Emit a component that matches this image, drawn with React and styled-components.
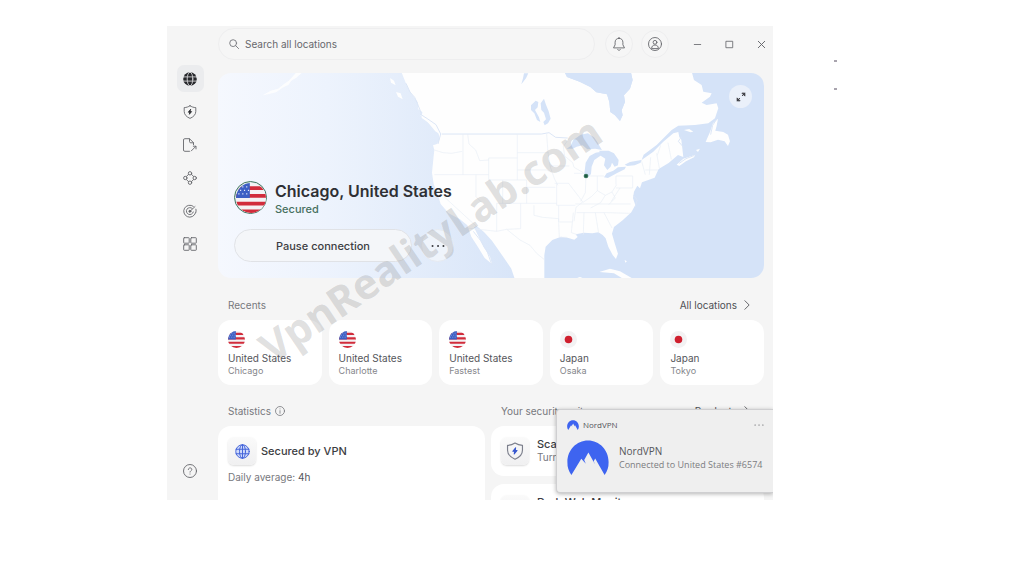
import React from 'react';
import styled, { createGlobalStyle } from 'styled-components';

const GlobalStyle = createGlobalStyle`
  * {
    box-sizing: border-box;
  }

  body {
    margin: 0;
    background: #ffffff;
    color: #3c3d42;
    font-family: Inter, "Liberation Sans", sans-serif;
    font-size: 10px;
    line-height: 12px;
  }

  button, input {
    font: inherit;
    color: inherit;
  }

  h1, h2, h3, p, ul {
    margin: 0;
    padding: 0;
    font-size: inherit;
    font-weight: inherit;
  }
`;

const recents = [
  { country: 'United States', place: 'Chicago', flag: 'us' },
  { country: 'United States', place: 'Charlotte', flag: 'us' },
  { country: 'United States', place: 'Fastest', flag: 'us' },
  { country: 'Japan', place: 'Osaka', flag: 'jp' },
  { country: 'Japan', place: 'Tokyo', flag: 'jp' },
];

const Icon = ({ size = 14, width = 1, children }) => (
  <svg
    width={size}
    height={size}
    viewBox="0 0 14 14"
    fill="none"
    stroke="currentColor"
    strokeWidth={width}
    strokeLinecap="round"
    strokeLinejoin="round"
    aria-hidden="true"
  >
    {children}
  </svg>
);

const GlobeSolidIcon = () => (
  <Icon>
    <circle cx="7" cy="7" r="6.8" fill="#26272b" stroke="none" />
    <g stroke="#e8e9eb" strokeWidth=".8">
      <ellipse cx="7" cy="7" rx="2.8" ry="6.8" />
      <path d="M.4 4.9h13.2M.4 9.1h13.2" />
    </g>
  </Icon>
);

const ShieldIcon = ({ size = 14, outline = 'currentColor', bolt = '#26272b' }) => (
  <Icon size={size} width={0.9}>
    <path stroke={outline} d="M7 .8c1.7 1.1 3.6 1.7 5.8 1.8v3.8c0 3.200-2.300 5.500-5.800 7-3.500-1.500-5.800-3.800-5.800-7V2.600C3.400 2.500 5.300 1.900 7 .8z" />
    <path d="M7.500 4.500 5.300 7.200h1.400l-.3 2.100 2.200-2.700H7.200z" fill={bolt} stroke={bolt} strokeWidth=".8" />
  </Icon>
);

const FileShareIcon = () => (
  <Icon width={0.9}>
    <path d="M6.500 13.300H1.800a1.300 1.300 0 0 1-1.300-1.300V2A1.300 1.300 0 0 1 1.800.7h4.700l4 4v2" />
    <path d="M6.500.9v2.600c0 .8.500 1.300 1.300 1.300h2.600M8.300 12.900l4.500-4.500M10.300 8.200h2.700v2.700" />
  </Icon>
);

const MeshIcon = () => (
  <Icon width={0.9}>
    <circle cx="7" cy="2.300" r="1.700" />
    <circle cx="7" cy="11.700" r="1.700" />
    <circle cx="2.300" cy="7" r="1.700" />
    <circle cx="11.700" cy="7" r="1.700" />
    <path d="M5.500 3.400 3.400 5.500M8.500 3.400l2.100 2.100M5.500 10.600 3.400 8.500M8.500 10.600l2.100-2.100" />
  </Icon>
);

const RadarIcon = () => (
  <Icon width={0.9}>
    <path d="M10.300 2.300A6 6 0 1 0 12.500 9" />
    <path d="M9.200 4.400A3.500 3.500 0 1 0 10.300 8" />
    <path d="M7 7.300 12 2.600M12.900 5.200c.3 1.200.3 2.300-.2 3.500" />
    <circle cx="6.900" cy="7.300" r="1" fill="currentColor" />
  </Icon>
);

const GridIcon = () => (
  <Icon width={0.9}>
    <rect x=".7" y=".7" width="5.500" height="5.500" rx=".6" />
    <rect x="7.800" y=".7" width="5.500" height="5.500" rx=".6" />
    <rect x=".7" y="7.800" width="5.500" height="5.500" rx=".6" />
    <rect x="7.800" y="7.800" width="5.500" height="5.500" rx=".6" />
  </Icon>
);

const HelpIcon = () => (
  <Icon width={0.9}>
    <circle cx="7" cy="7" r="6.500" />
    <path d="M5.300 5.500c0-2.200 3.500-2.200 3.500 0 0 1.300-1.800 1.300-1.800 2.600M7 10v.1" />
  </Icon>
);

const SearchIcon = () => (
  <Icon size={10} width={1.300}>
    <circle cx="5.800" cy="5.800" r="4.800" />
    <path d="m9.400 9.400 4 4" />
  </Icon>
);

const BellIcon = () => (
  <Icon width={0.9}>
    <path d="M7 1.300c-2.500 0-3.900 1.700-3.900 4v2.500L1.500 10.900h11l-1.600-3.100V5.300c0-2.300-1.400-4-3.900-4zM7 .5v.8M5.600 12.600c.7.9 2.100.9 2.800 0" />
  </Icon>
);

const UserIcon = () => (
  <Icon width={0.9}>
    <circle cx="7" cy="7" r="6.500" />
    <circle cx="7" cy="5.300" r="1.900" />
    <path d="M3.600 11.200c.2-2.200 1.500-3.200 3.400-3.200s3.200 1 3.400 3.200z" />
  </Icon>
);

const ChevronIcon = () => (
  <Icon size={12}>
    <path d="M4.500 2 9.500 7l-5 5" />
  </Icon>
);

const GlobeIcon = () => (
  <Icon size={15} width={0.9}>
    <circle cx="7" cy="7" r="6.300" fill="#cfdafa" />
    <ellipse cx="7" cy="7" rx="2.800" ry="6.300" />
    <path d="M1 4.900h12M1 9.100h12M7 .7v12.600" />
  </Icon>
);

const UsFlag = ({ size }) => (
  <svg width={size} height={size} viewBox="0 0 26 26" role="img" aria-label="United States flag">
    <clipPath id={`us-${size}`}>
      <circle cx="13" cy="13" r="13" />
    </clipPath>
    <g clipPath={`url(#us-${size})`}>
      <path fill="#f4f2f4" d="M0 0h26v26H0z" />
      <path stroke="#d12c3b" strokeWidth="3.300" d="M0 4.500h26M0 11.200h26M0 17.900h26M0 24.600h26" />
      <path fill="#3c5fc4" d="M0 0h12v13H0z" />
      <path
        stroke="#e6ebfa"
        strokeWidth="1"
        strokeDasharray="1 2.400"
        d="M2 3.400h10M3.500 6.400h8M2 9.400h10"
      />
    </g>
  </svg>
);

const JapanFlag = ({ size }) => (
  <svg width={size} height={size} viewBox="0 0 26 26" role="img" aria-label="Japan flag">
    <circle cx="13" cy="13" r="13" fill="#f3f2f3" />
    <circle cx="13" cy="13" r="5.800" fill="#cf1f2e" />
  </svg>
);

const NordLogo = ({ size }) => (
  <svg width={size} height={Math.round(size * 0.83)} viewBox="0 0 42 35" aria-hidden="true">
    <path
      fill="#3e64f0"
      d="M4.400 35A21 21 0 0 1 .4 22C.4 10 9.600.5 21 .5S41.600 10 41.600 22a21 21 0 0 1-4 13L28.200 18.600l-1.500 2.700 1.400 3.300-6.700-12.200-4.200 7.600 1.600 3.700-4.500-5z"
    />
  </svg>
);

const WorldMap = () => (
  <MapSvg viewBox="0 0 546 205" preserveAspectRatio="xMaxYMid slice" aria-hidden="true">
    <defs>
      <linearGradient id="sea" x1="0" x2="1" y1="0" y2="0">
        <stop offset="0" stopColor="#f5f8fe" />
        <stop offset=".2" stopColor="#edf3fd" />
        <stop offset=".4" stopColor="#e1ebfa" />
        <stop offset=".6" stopColor="#d5e3f8" />
      </linearGradient>
    </defs>
    <path fill="url(#sea)" d="M0 0h546v205H0z" />
    <g transform="translate(182 -3) scale(.3333)">
      <g fill="#fefefe">
        <path opacity=".85" d="M-412 76l24-14 22-6 18-14 14-10 10-10 12-14h18l-18 16-14 8-8 12-20 10-16 12-22 6z" />
        <path d="M-42 8 5 8l16 40 12 22 20 26 2 22 12 8-2 18 18 12 20 14 12 16 4 22-8 14-12 4 4 14-3 28-4 40 5 34 13 34 8 26 24 28 34 18 22 18 12 34 18 28 22 36 22 18-6-22-20-30-14-30-14-28 8-4 22 18 24 26 32 46 26 38L346 632H433V556l4-26 20-20 26-10 20 3 20 6 10-8-6-8 25-5 25 2 18-3 13 8 9 10 8 25 13 25 10 12 6-16-10-32-8-28 6-20 26-20 26-24 12-22-7-20 3-20 10-18 8 8 6-18 38-14 12-26 30-18 28-24 16 6-2-18-4-34-6-8L835 186 820 190 790 215 760 245 725 270 731 254 770 225 815 180 835 167 885 165 925 160 945 145 955 115 950 100 920 105 905 98 930 80 935 70 910 65 905 45 882 30 876 8H693l5 22-8 26-18 20 3 20-10 25 3 15-8 17-15-17-14-10-3-30-7-23-32-6-18-16-32-16-38-14-6-12z" />
        <path d="M-30 24l12 8 5 14-14-8zM-12 66l14 4 6 18-14-8zM60 134l20 8 18 12 20 20 4 20-16-10-20-24z" />
        <path d="M917 216l14-32 8-24 15-14-4 22-4 14 24 4 14 8 6 20-6 14-10-14-20-5-22 8zM830 284l20-18 36-12-4 8-24 12-20 14zM888 240l12-4-6 10zM852 180l16-3 12 8-8 2zM598 606l32-10 30 8 42 24H672l-30-18zM520 628l20-7 18 7zM674 570l7 4-5 4z" />
      </g>
      <g fill="#d5e3f8">
        <path d="M495 8h198l5 22-8 26-18 20 3 20-10 25 3 15-8 17-15-17-14-10-3-30-7-23-32-6-18-16-32-16-38-14z" />
        <path d="M500 236l12-8 8-18 22-16 22-4 18 12 10 14 8 14 6 10-20-4-24 2-14-12-18 4-12 6z" />
        <path d="M553 312l4-34 12-20 18-10 24-4 2 6-16 10-14 10-8 20-2 22-8 8h-8zM598 242l28 0 16 8 14 20-2 16-10 4-8-12-4 12-10 10-10-14 4-20-16-10zM612 322l8-12 20-8 14-10 24-2-4 8-24 12-26 14zM674 284l16-8 34-6-2 8-18 8-22 2z" />
        <path d="M372 10h13l-7 15-14 18 5-18zM393 106l14-14 8 4-2 16-8 8 12 22 4 14-10-6-8-20-10-10zM422 100l10-14 6 18 8 20 6 22-8 14-10 6-4-10 8-8-6-20-8-8z" />
      </g>
      <g fill="none" stroke="#dce6f6" strokeWidth="3">
        <path d="M18 40l12 26 14 16 8 18 12 30M60 132l22 14 26 18 14 28-8 30M220 484l22 28 20 34 14 40M845 200l-10 14 16 18M950 148l-12 18-6 28M838 280l20-14 26-10M700 376l12 14-6 20" />
        <path d="M125 192h300l22-4 20 14 36 2" />
      </g>
      <g fill="none" stroke="#e9eef6" strokeWidth="2">
        <path d="M103 240l26 8 26 2 32-6M189 192v122M103 314h125M203 192l4 30 20 18 12 32 28-2M352 192v138M266 264h86M266 264v50h-38M228 314v66l20 20M266 314v16h114M308 330v70M352 248h94M352 300h88l16 8M440 192l4 56 6 40 14 40 10 18M380 330v22h86M380 352v48M290 400h180M290 400v84M362 400v76l-42 2M200 474l90 10 30-6 40 32 30 16 20 24 22 18M132 380l96 88M402 406v30l26 6 48 4v10M470 340v66h56M476 406v50l2 46h22M450 288h58M464 340h42l12 16 20 26 10 14-20 16-6 42M508 204l-18 26 4 28 24 20 4 14 28 16M522 310h34M558 318l-2 50-14 26M592 318v44l-18 18-26 18M568 318h44M592 362l24 14 20-10 14-22M648 318v26M648 354h50v-36h-50M526 402h166M530 428h90l70 2M552 428l-2 66M586 428l10 62M612 428l24 46M520 428l-6 60 18 6M616 376l-14 22-30 16M636 366l10 18-20 20M660 354l-26 40M724 270l12 44M752 262l-4 52M770 250l8 44M782 226l-10 30M804 218l10 50M736 300h38M478 456h40" />
      </g>
      <circle cx="558" cy="318" r="7" fill="#3d7a62" />
      <circle cx="558" cy="318" r="4" fill="#1f5a43" />
    </g>
  </MapSvg>
);

const App = () => {
  return (
    <Page>
      <GlobalStyle />
      <AppWindow>
        <Sidebar aria-label="Main">
          <NavButton $active aria-label="VPN"><GlobeSolidIcon /></NavButton>
          <NavButton aria-label="Threat protection"><ShieldIcon /></NavButton>
          <NavButton aria-label="File sharing"><FileShareIcon /></NavButton>
          <NavButton aria-label="Meshnet"><MeshIcon /></NavButton>
          <NavButton aria-label="Dark web monitor"><RadarIcon /></NavButton>
          <NavButton aria-label="More products"><GridIcon /></NavButton>
          <HelpButton aria-label="Help"><HelpIcon /></HelpButton>
        </Sidebar>

        <Main>
          <TopBar>
            <SearchBox>
              <SearchIcon />
              <SearchInput type="text" aria-label="Search all locations" placeholder="Search all locations" />
            </SearchBox>
            <RoundButton aria-label="Notifications"><BellIcon /></RoundButton>
            <RoundButton aria-label="Account"><UserIcon /></RoundButton>
            <WindowButtons>
              <WindowButton aria-label="Minimize">
                <Icon size={9} width={1.300}><path d="M2 7h10" /></Icon>
              </WindowButton>
              <WindowButton aria-label="Maximize">
                <Icon size={9} width={1.300}><path d="M2 2h10v10H2z" /></Icon>
              </WindowButton>
              <WindowButton aria-label="Close">
                <Icon size={9} width={1.500}><path d="m2 2 10 10M12 2 2 12" /></Icon>
              </WindowButton>
            </WindowButtons>
          </TopBar>

          <MapCard>
            <WorldMap />
            <ExpandButton aria-label="Expand map">
              <Icon size={12} width={1.100}>
                <path d="M8.500 2.500h3v3zM5.500 11.500h-3v-3z" fill="currentColor" />
                <path d="m11.500 2.500-3 3M2.500 11.500l3-3" />
              </Icon>
            </ExpandButton>
            <Connection>
              <FlagRing><UsFlag size={30} /></FlagRing>
              <div>
                <Location>Chicago, United States</Location>
                <Status>Secured</Status>
              </div>
            </Connection>
            <Actions>
              <PauseButton>Pause connection</PauseButton>
              <MoreButton aria-label="More options">
                <Icon>
                  <path d="M1.500 7h.1M7 7h.1M12.400 7h.1" strokeWidth="1.900" />
                </Icon>
              </MoreButton>
            </Actions>
          </MapCard>

          <Recents>
            <SectionHead>
              <h2>Recents</h2>
              <HeadLink href="#locations">All locations <ChevronIcon /></HeadLink>
            </SectionHead>
            <RecentGrid>
              {recents.map((item) => (
                <RecentCard key={item.place}>
                  {item.flag === 'us' ? <UsFlag size={17} /> : <JapanFlag size={17} />}
                  <Country>{item.country}</Country>
                  <Place>{item.place}</Place>
                </RecentCard>
              ))}
            </RecentGrid>
          </Recents>

          <Columns>
            <section>
              <SectionHead>
                <Heading>
                  Statistics
                  <Icon size={10} width={1.100}>
                    <circle cx="7" cy="7" r="6.300" />
                    <path d="M7 6.500v3.700M7 4v.1" />
                  </Icon>
                </Heading>
              </SectionHead>
              <StatCard>
                <CardTitle>
                  <Tile><GlobeIcon /></Tile>
                  <h3>Secured by VPN</h3>
                </CardTitle>
                <Average>Daily average: <strong>4h</strong></Average>
              </StatCard>
            </section>
            <section>
              <SectionHead>
                <h2>Your security suite</h2>
                <HeadLink href="#products">Products <ChevronIcon /></HeadLink>
              </SectionHead>
              <SuiteCard>
                <Tile><ShieldIcon size={18} outline="#7c7f8c" bolt="#3858cf" /></Tile>
                <div>
                  <SuiteName>Scan for malware</SuiteName>
                  <SuiteText>Turn on protection</SuiteText>
                </div>
              </SuiteCard>
              <SuiteCard>
                <Tile><RadarIcon /></Tile>
                <div>
                  <SuiteName>Dark Web Monitor</SuiteName>
                  <SuiteText>Turn on alerts</SuiteText>
                </div>
              </SuiteCard>
            </section>
          </Columns>
        </Main>

        <Toast role="status">
          <ToastHead>
            <NordLogo size={12} />
            <span>NordVPN</span>
            <ToastMenu aria-label="Notification options">
              <Icon size={10}>
                <path d="M1.500 7h.1M7 7h.1M12.400 7h.1" strokeWidth="1.700" />
              </Icon>
            </ToastMenu>
          </ToastHead>
          <ToastBody>
            <NordLogo size={42} />
            <div>
              <ToastTitle>NordVPN</ToastTitle>
              <ToastText>Connected to United States #6574</ToastText>
            </div>
          </ToastBody>
        </Toast>
      </AppWindow>

      <Marks aria-hidden="true">
        <Mark />
        <Mark />
      </Marks>
      <Watermark>VpnRealityLab.com</Watermark>
    </Page>
  );
};

const Page = styled.div`
  position: relative;
  display: grid;
  grid-template-columns: minmax(0, 1fr) 188px;
  column-gap: 61px;
  height: 100vh;
  padding: 26px 2px 76px 167px;
  overflow: hidden;
`;

const AppWindow = styled.div`
  position: relative;
  display: flex;
  min-height: 0;
  background: #f5f5f5;
  overflow: hidden;
`;

const Sidebar = styled.nav`
  display: flex;
  flex: 0 0 51px;
  flex-direction: column;
  align-items: center;
  gap: 6px;
  padding: 39px 5px 16px 0;
`;

const NavButton = styled.button`
  display: grid;
  place-items: center;
  width: 27px;
  height: 27px;
  padding: 0;
  border: 0;
  border-radius: 7px;
  color: #65666b;
  background: ${({ $active }) => ($active ? '#ebecee' : 'transparent')};
`;

const HelpButton = styled(NavButton)`
  margin-top: auto;
`;

const Main = styled.main`
  flex: 1;
  min-width: 0;
  padding: 2px 9px 0 0;
`;

const TopBar = styled.header`
  display: flex;
  align-items: center;
  gap: 8px;
  height: 32px;
`;

const SearchBox = styled.label`
  display: flex;
  flex: 1;
  align-items: center;
  gap: 6px;
  height: 32px;
  margin-right: 2px;
  padding: 0 10px;
  border: 1px solid #eeeeef;
  border-radius: 16px;
  background: #f6f6f6;
  color: #77787d;
`;

const SearchInput = styled.input`
  flex: 1;
  min-width: 0;
  padding: 0;
  border: 0;
  outline: 0;
  background: transparent;

  &::placeholder {
    color: #67686d;
    opacity: 1;
  }
`;

const RoundButton = styled.button`
  display: grid;
  place-items: center;
  width: 28px;
  height: 28px;
  padding: 0;
  border: 1px solid #eeeeef;
  border-radius: 50%;
  background: #f6f6f6;
  color: #65666b;
`;

const WindowButtons = styled.div`
  display: flex;
  gap: 16px;
  margin: 0 -5px 0 12px;
`;

const WindowButton = styled.button`
  display: grid;
  place-items: center;
  width: 16px;
  height: 16px;
  padding: 0;
  border: 0;
  background: transparent;
  color: #65666b;
`;

const MapCard = styled.section`
  position: relative;
  display: flex;
  flex-direction: column;
  justify-content: flex-end;
  height: 205px;
  margin-top: 13px;
  padding: 16px;
  border-radius: 13px;
  overflow: hidden;
`;

const MapSvg = styled.svg`
  position: absolute;
  inset: 0;
  width: 100%;
  height: 100%;
`;

const ExpandButton = styled.button`
  position: absolute;
  top: 12px;
  right: 12px;
  display: grid;
  place-items: center;
  width: 23px;
  height: 23px;
  padding: 0;
  border: 0;
  border-radius: 50%;
  background: #eaf0fa;
`;

const Connection = styled.div`
  position: relative;
  display: flex;
  align-items: flex-start;
  gap: 8px;
`;

const FlagRing = styled.span`
  display: grid;
  place-items: center;
  width: 33px;
  height: 33px;
  border: 1px solid #3f7461;
  border-radius: 50%;
  background: #e4ece9;
`;

const Location = styled.h1`
  color: #2f3035;
  font-size: 16px;
  font-weight: 600;
  line-height: 20px;
`;

const Status = styled.p`
  color: #47705f;
  font-size: 11px;
  font-weight: 500;
  line-height: 16px;
`;

const Actions = styled.div`
  position: relative;
  display: flex;
  gap: 9px;
  margin-top: 12px;
`;

const PauseButton = styled.button`
  width: 178px;
  height: 33px;
  padding: 0;
  border: 1px solid #e0e2e6;
  border-radius: 17px;
  background: #f4f6f9;
  color: #3c3d42;
  font-size: 11px;
  font-weight: 500;
`;

const MoreButton = styled.button`
  display: grid;
  place-items: center;
  width: 33px;
  height: 33px;
  padding: 0;
  border: 1px solid #e6eaf1;
  border-radius: 50%;
  background: #eff4fb;
`;

const Recents = styled.section`
  margin-top: 19px;
`;

const SectionHead = styled.div`
  display: flex;
  align-items: center;
  justify-content: space-between;
  height: 16px;
  padding: 0 11px 0 10px;
  color: #77787d;
`;

const Heading = styled.h2`
  display: flex;
  align-items: center;
  gap: 4px;
`;

const HeadLink = styled.a`
  display: flex;
  align-items: center;
  gap: 4px;
  color: #4e4f54;
  text-decoration: none;
`;

const RecentGrid = styled.div`
  display: grid;
  grid-template-columns: repeat(5, minmax(0, 1fr));
  gap: 7px;
  margin-top: 7px;
`;

const RecentCard = styled.button`
  display: flex;
  flex-direction: column;
  align-items: flex-start;
  height: 65px;
  padding: 11px 10px 8px;
  border: 0;
  border-radius: 13px;
  background: #ffffff;
  text-align: left;
`;

const Country = styled.span`
  margin-top: 4px;
  color: #55565b;
  line-height: 13px;
`;

const Place = styled.span`
  color: #85868b;
  font-size: 9px;
  line-height: 12px;
`;

const Columns = styled.div`
  display: grid;
  grid-template-columns: 267px minmax(0, 1fr);
  gap: 6px;
  margin-top: 18px;
`;

const Panel = styled.div`
  border-radius: 13px;
  background: #ffffff;
`;

const StatCard = styled(Panel)`
  height: 130px;
  margin-top: 7px;
  padding: 11px 10px;
`;

const CardTitle = styled.div`
  display: flex;
  align-items: center;
  gap: 5px;
  color: #3c3d42;
  font-size: 11px;
  font-weight: 500;
`;

const Tile = styled.span`
  display: grid;
  flex: none;
  place-items: center;
  width: 28px;
  height: 28px;
  border-radius: 6px;
  background: linear-gradient(#fafafa, #f0f0f1);
  box-shadow: 0 1px 2px rgba(0, 0, 0, 0.14);
  color: #4262d8;
`;

const Average = styled.p`
  margin-top: 6px;
  color: #77787d;

  strong {
    color: #55565b;
    font-weight: 400;
  }
`;

const SuiteCard = styled(Panel)`
  display: flex;
  align-items: flex-start;
  gap: 8px;
  height: 50px;
  margin-top: 7px;
  padding: 11px 10px;

  & + & {
    margin-top: 8px;
  }
`;

const SuiteName = styled.h3`
  font-size: 11px;
  font-weight: 500;
  line-height: 14px;
`;

const SuiteText = styled.p`
  color: #77787d;
  line-height: 13px;
`;

const Toast = styled.div`
  position: absolute;
  right: 0;
  bottom: 7px;
  width: 217px;
  height: 84px;
  padding: 9px 9px 9px 10px;
  border: 1px solid #cfcfd1;
  border-right: 0;
  border-radius: 4px 0 0 4px;
  background: #efefef;
  box-shadow: 0 1px 4px rgba(0, 0, 0, 0.3);
  color: #55565b;
  font-family: "Open Sans", "Noto Sans", sans-serif;
`;

const ToastHead = styled.div`
  display: flex;
  align-items: center;
  gap: 4px;
  font-size: 8px;
  line-height: 12px;
`;

const ToastMenu = styled.button`
  display: grid;
  place-items: center;
  margin-left: auto;
  padding: 0;
  border: 0;
  background: transparent;
`;

const ToastBody = styled.div`
  display: flex;
  align-items: center;
  gap: 10px;
  margin-top: 9px;
`;

const ToastTitle = styled.p`
  font-size: 10px;
  line-height: 13px;
`;

const ToastText = styled.p`
  color: #7b7c80;
  font-size: 9px;
  line-height: 13px;
  white-space: nowrap;
`;

const Marks = styled.div`
  display: flex;
  flex-direction: column;
  gap: 26px;
  padding-top: 34px;
`;

const Mark = styled.span`
  width: 3px;
  height: 2px;
  background: #a9a4ae;
`;

const Watermark = styled.div`
  position: absolute;
  top: 50%;
  left: 42%;
  color: rgba(120, 120, 120, 0.23);
  font-family: "Noto Sans", "Open Sans", sans-serif;
  font-size: 42px;
  font-weight: 700;
  line-height: 1;
  white-space: nowrap;
  transform: translate(-50%, -50%) translateY(-49px) rotate(-34deg);
  pointer-events: none;
`;

export default App;
